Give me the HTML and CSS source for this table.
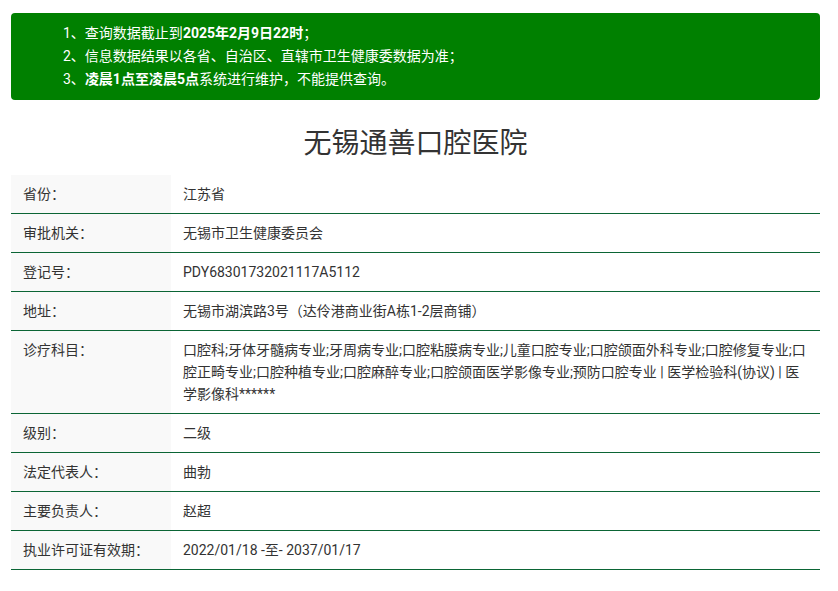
FILE: index.html
```html
<!DOCTYPE html>
<html lang="zh-CN">
<head>
<meta charset="utf-8">
<title>无锡通善口腔医院</title>
<link rel="stylesheet" href="styles.css">
</head>
<body>
<div class="page">
  <div class="notice">
    <p>1、查询数据截止到<b>2025年2月9日22时</b>；</p>
    <p>2、信息数据结果以各省、自治区、直辖市卫生健康委数据为准；</p>
    <p>3、<b>凌晨1点至凌晨5点</b>系统进行维护，不能提供查询。</p>
  </div>
  <h1 class="title">无锡通善口腔医院</h1>
  <div class="table">
    <div class="row"><div class="label">省份：</div><div class="value">江苏省</div></div>
    <div class="row"><div class="label">审批机关：</div><div class="value">无锡市卫生健康委员会</div></div>
    <div class="row"><div class="label">登记号：</div><div class="value">PDY68301732021117A5112</div></div>
    <div class="row"><div class="label">地址：</div><div class="value">无锡市湖滨路3号（达伶港商业街A栋1-2层商铺）</div></div>
    <div class="row"><div class="label">诊疗科目：</div><div class="value">口腔科;牙体牙髓病专业;牙周病专业;口腔粘膜病专业;儿童口腔专业;口腔颌面外科专业;口腔修复专业;口腔正畸专业;口腔种植专业;口腔麻醉专业;口腔颌面医学影像专业;预防口腔专业 | 医学检验科(协议) | 医学影像科******</div></div>
    <div class="row"><div class="label">级别：</div><div class="value">二级</div></div>
    <div class="row"><div class="label">法定代表人：</div><div class="value">曲勃</div></div>
    <div class="row"><div class="label">主要负责人：</div><div class="value">赵超</div></div>
    <div class="row"><div class="label">执业许可证有效期：</div><div class="value">2022/01/18 -至- 2037/01/17</div></div>
  </div>
</div>
</body>
</html>
```

FILE: styles.css
```css
html, body {
  margin: 0;
  padding: 0;
  background: #ffffff;
}
body {
  font-family: Roboto, "Noto Sans CJK SC", sans-serif;
  font-size: 14px;
  color: #333333;
}
.page {
  width: 809px;
  margin-left: 11px;
  padding-top: 13px;
}
.notice {
  background: #008000;
  color: #ffffff;
  border-radius: 4px;
  padding: 9px 12px 9px 52px;
}
.notice p {
  margin: 0;
  line-height: 23px;
}
.notice b {
  font-weight: bold;
}
.title {
  margin: 24px 0 11px;
  font-size: 28px;
  font-weight: normal;
  line-height: 40px;
  text-align: center;
  color: #333333;
}
.table {
  display: flex;
  flex-direction: column;
}
.row {
  display: grid;
  grid-template-columns: 160px 1fr;
  border-bottom: 1px solid #0b6535;
}
.label {
  background: #f9f9f9;
  padding: 8px 12px;
  line-height: 22px;
}
.value {
  padding: 8px 10px 8px 12px;
  line-height: 22px;
}
```
